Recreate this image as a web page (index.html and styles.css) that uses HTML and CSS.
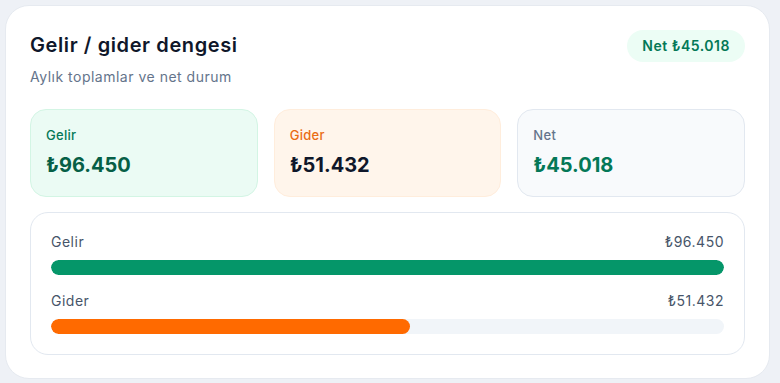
FILE: index.html
```html
<!DOCTYPE html>
<html lang="tr">
<head>
<meta charset="utf-8">
<link rel="stylesheet" href="styles.css">
</head>
<body>
<section class="card">
  <header class="head">
    <div>
      <h2 class="title">Gelir / gider dengesi</h2>
      <p class="sub">Aylık toplamlar ve net durum</p>
    </div>
    <span class="badge">Net ₺45.018</span>
  </header>
  <div class="stats">
    <div class="stat stat-in">
      <div class="stat-label">Gelir</div>
      <div class="stat-value">₺96.450</div>
    </div>
    <div class="stat stat-out">
      <div class="stat-label">Gider</div>
      <div class="stat-value">₺51.432</div>
    </div>
    <div class="stat stat-net">
      <div class="stat-label">Net</div>
      <div class="stat-value">₺45.018</div>
    </div>
  </div>
  <div class="bars">
    <div class="row">
      <div class="row-head"><span>Gelir</span><span>₺96.450</span></div>
      <div class="track"><div class="fill fill-in" style="width:100%"></div></div>
    </div>
    <div class="row">
      <div class="row-head"><span>Gider</span><span>₺51.432</span></div>
      <div class="track"><div class="fill fill-out" style="width:53.3%"></div></div>
    </div>
  </div>
</section>
</body>
</html>
```
FILE: styles.css
```css
* { box-sizing: border-box; }
html, body { margin: 0; }
body {
  background: #eef1f6;
  font-family: Inter, "Noto Sans", "DejaVu Sans", sans-serif;
  padding: 5px 10px 4px 5px;
}
.card {
  width: 765px;
  height: 374px;
  background: #fff;
  border: 1px solid #e6eaf0;
  border-radius: 24px;
  padding: 24px;
}
.head {
  display: flex;
  justify-content: space-between;
  align-items: flex-start;
}
.title {
  margin: 0;
  padding-top: 1px;
  font-size: 20px;
  line-height: 28px;
  font-weight: 600;
  color: #0f172a;
  letter-spacing: 0.6px;
}
.sub {
  margin: 8px 0 0;
  font-size: 14px;
  line-height: 20px;
  color: #64748b;
  letter-spacing: 0.5px;
}
.badge {
  background: #ecfdf5;
  color: #047857;
  font-size: 14px;
  font-weight: 600;
  line-height: 20px;
  letter-spacing: 0.5px;
  padding: 6px 15px;
  border-radius: 999px;
}
.stats {
  margin-top: 22px;
  display: grid;
  grid-template-columns: repeat(3, 1fr);
  gap: 16px;
}
.stat {
  height: 88px;
  border-radius: 16px;
  border: 1px solid;
  padding: 15px 15px;
}
.stat-label {
  font-size: 13px;
  line-height: 20px;
  font-weight: 500;
  letter-spacing: 0.3px;
}
.stat-value {
  margin-top: 6px;
  font-size: 20px;
  line-height: 28px;
  font-weight: 700;
}
.stat-in { background: #ebfbf4; border-color: #d3f5e4; }
.stat-in .stat-label { color: #047857; }
.stat-in .stat-value { color: #065f46; }
.stat-out { background: #fff5eb; border-color: #ffeddc; }
.stat-out .stat-label { color: #ea6c14; }
.stat-out .stat-value { color: #0f172a; }
.stat-net { background: #f8fafc; border-color: #e2e8f0; }
.stat-net .stat-label { color: #64748b; }
.stat-net .stat-value { color: #047857; }
.bars {
  margin-top: 15px;
  border: 1px solid #e2e8f0;
  border-radius: 18px;
  padding: 19px 20px 20px;
  display: flex;
  flex-direction: column;
  gap: 16px;
}
.row-head {
  display: flex;
  justify-content: space-between;
  font-size: 14px;
  line-height: 20px;
  color: #475569;
  letter-spacing: 0.5px;
  margin-bottom: 8px;
}
.track {
  height: 15px;
  background: #f1f5f9;
  border-radius: 999px;
  overflow: hidden;
}
.fill { height: 100%; border-radius: 999px; }
.fill-in { background: #059669; }
.fill-out { background: #ff6a00; }
```
